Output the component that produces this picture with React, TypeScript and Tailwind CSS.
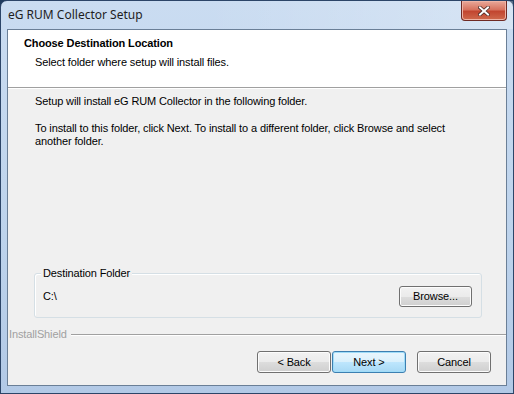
import React from "react";

const font = "font-['Liberation_Sans',Arial,sans-serif] text-[11px] leading-[13px] tracking-[-0.12px]";

function WinButton({label, primary}: {label: string; primary?: boolean}) {
    return (
        <div
            className={
                "h-[22px] w-[74px] rounded-[3px] border flex items-center justify-center text-black " +
                (primary
                    ? "border-[#3c7fb1] bg-[linear-gradient(to_bottom,#eaf6fd_0%,#d9f0fc_50%,#bee6fd_51%,#a7d9f5_100%)] shadow-[inset_0_0_0_1px_#9fdcf8]"
                    : "border-[#707070] bg-[linear-gradient(to_bottom,#f2f2f2_0%,#ebebeb_50%,#dddddd_51%,#cfcfcf_100%)] shadow-[inset_0_0_0_1px_#fcfcfc]")
            }
        >
            {label}
        </div>
    );
}

export default function App() {
    return (
        <div className={"w-[514px] h-[394px] bg-[#1f3b5e] " + font}>
            <div className="h-full rounded-t-[7px] border border-[#2c4568] bg-[linear-gradient(to_bottom,#cadcf1,#bdd3ec_60%,#b2c9e6)] flex flex-col">
                {/* title bar */}
                <div className="h-[28px] flex items-start bg-[linear-gradient(to_right,transparent_40%,rgba(255,255,255,0.25))]">
                    <div className="pl-[7px] pt-[6px] font-['Noto_Sans',sans-serif] text-[12px] leading-[16px] tracking-normal text-[#1e1e1e]">
                        eG RUM Collector Setup
                    </div>
                    <div className="ml-auto mr-[6px] w-[46px] h-[20px] rounded-b-[4px] border border-t-0 border-[#6e2a24] bg-[linear-gradient(to_bottom,#e9a99a_0%,#d7735f_45%,#c24630_55%,#cf6a4d_100%)] shadow-[inset_0_0_0_1px_#eeb3a5] flex items-center justify-center">
                        <svg width="12" height="10" viewBox="0 0 12 10">
                            <path d="M2 1.5 L10 8.5 M10 1.5 L2 8.5" stroke="#4b2a26" strokeWidth="3.6" strokeLinecap="square" />
                            <path d="M2 1.5 L10 8.5 M10 1.5 L2 8.5" stroke="#ffffff" strokeWidth="2" strokeLinecap="square" />
                        </svg>
                    </div>
                </div>

                {/* client area */}
                <div className="mx-[6px] mb-[7px] flex-1 border border-[#6a7f97] bg-[#f0f0f0] flex flex-col">
                    <div className="h-[58px] bg-white border-b border-[#a0a0a0] pt-[7px] pl-[16px]">
                        <div className="font-bold text-black">Choose Destination Location</div>
                        <div className="mt-[6px] pl-[11px] text-black">Select folder where setup will install files.</div>
                    </div>
                    <div className="h-px bg-white" />

                    <div className="flex-1 flex flex-col pt-[6px] pb-[12px] text-black">
                        <div className="pl-[27px]">Setup will install eG RUM Collector in the following folder.</div>
                        <div className="pl-[27px] mt-[14px]">
                            To install to this folder, click Next. To install to a different folder, click Browse and select
                            <br />
                            another folder.
                        </div>

                        <div className="flex-1" />

                        <div className="relative ml-[26px] mr-[24px] h-[45px] rounded-[3px] border border-[#d5dfe5] shadow-[inset_1px_1px_0_#ffffff] flex items-center pl-[8px] pr-[9px]">
                            <span className="absolute left-[6px] -top-[7px] px-[2px] bg-[#f0f0f0]">Destination Folder</span>
                            <span className="mt-[2px]">C:\</span>
                            <div className="ml-auto mt-[2px]">
                                <div className="h-[21px] w-[73px] rounded-[3px] border border-[#707070] bg-[linear-gradient(to_bottom,#f2f2f2_0%,#ebebeb_50%,#dddddd_51%,#cfcfcf_100%)] shadow-[inset_0_0_0_1px_#fcfcfc] flex items-center justify-center">
                                    Browse...
                                </div>
                            </div>
                        </div>

                        <div className="mt-[10px] flex items-center gap-[4px]">
                            <span className="text-[#a0a0a0] pl-[1px]">InstallShield</span>
                            <div className="flex-1 flex flex-col">
                                <div className="h-px bg-[#a0a0a0]" />
                                <div className="h-px bg-white" />
                            </div>
                        </div>

                        <div className="mt-[10px] flex pr-[15px]">
                            <div className="ml-auto flex">
                                <WinButton label="< Back" />
                                <div className="ml-px">
                                    <WinButton label="Next >" primary />
                                </div>
                                <div className="ml-[11px]">
                                    <WinButton label="Cancel" />
                                </div>
                            </div>
                        </div>
                    </div>
                </div>
            </div>
        </div>
    );
}
